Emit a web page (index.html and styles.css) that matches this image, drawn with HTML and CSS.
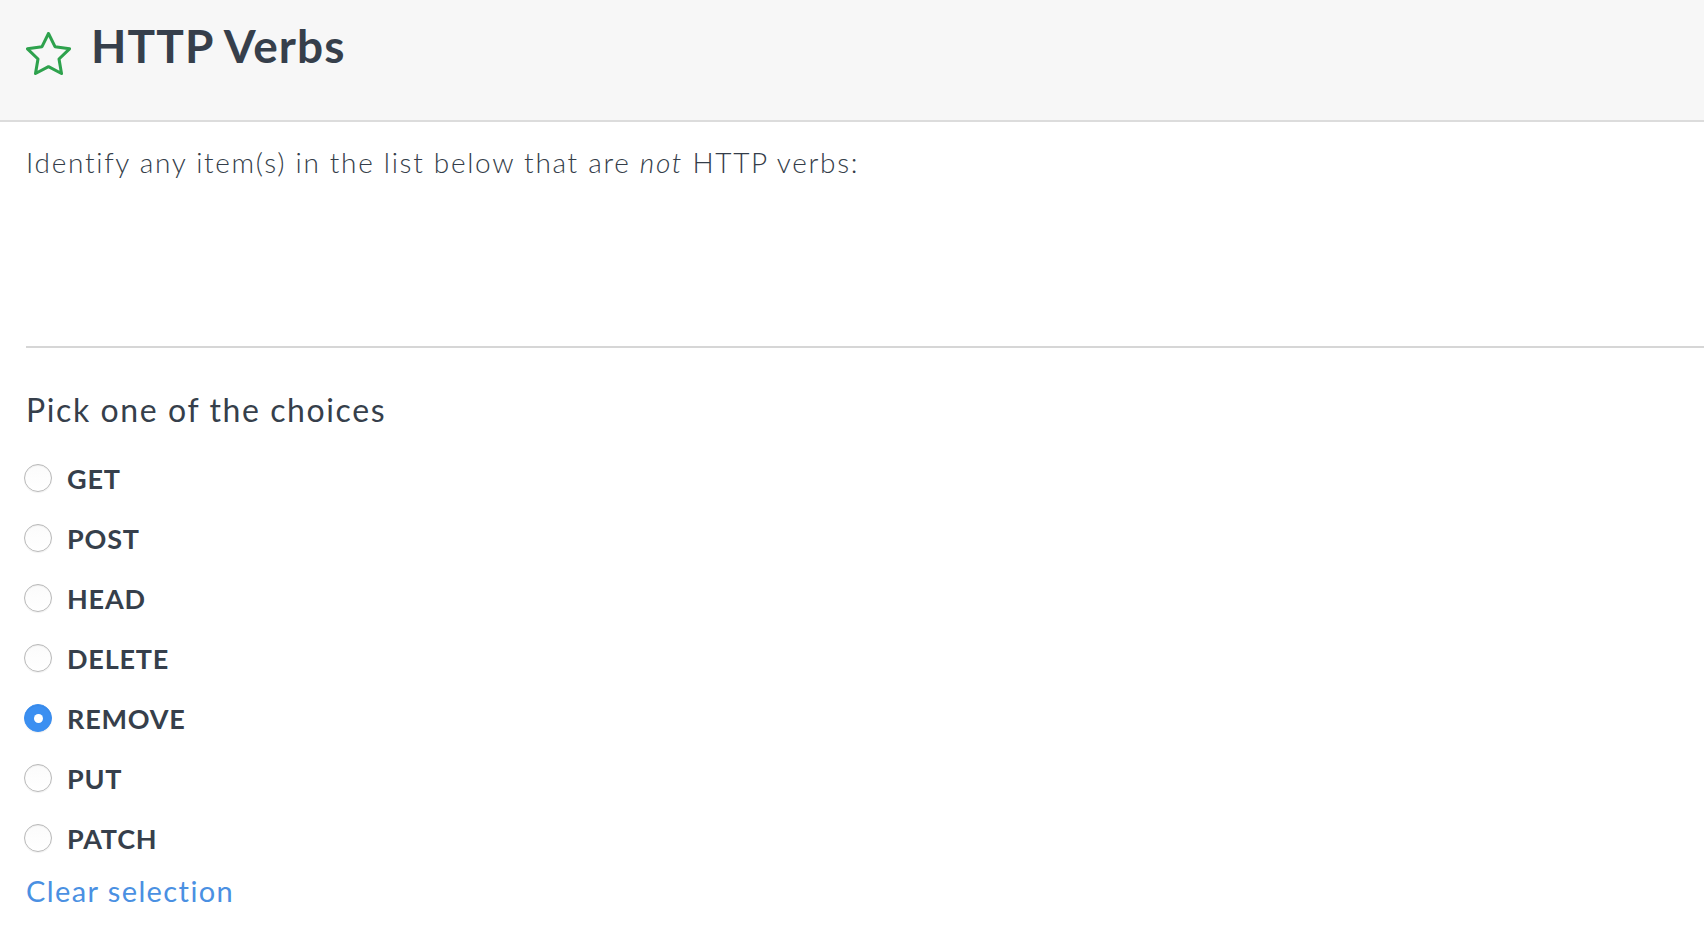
FILE: index.html
```html
<!DOCTYPE html>
<html>
<head>
<meta charset="utf-8">
<link rel="stylesheet" href="styles.css">
</head>
<body>
<header class="header">
  <svg class="star" width="45" height="43" viewBox="1.3 1.3 21.4 20.42" aria-hidden="true">
    <polygon points="12 2 15.09 8.26 22 9.27 17 14.14 18.18 21.02 12 17.77 5.82 21.02 7 14.14 2 9.27 8.91 8.26 12 2" fill="none" stroke="#2ea24d" stroke-width="1.45" stroke-linejoin="round"/>
  </svg>
  <h1 class="title">HTTP Verbs</h1>
</header>
<main class="main">
  <div class="question">
    <p class="prompt">Identify any item(s) in the list below that are <em>not</em> HTTP verbs:</p>
  </div>
  <div class="choices">
    <h2 class="choices-title">Pick one of the choices</h2>
    <ul class="options">
      <li class="option"><span class="radio"></span><span class="label">GET</span></li>
      <li class="option"><span class="radio"></span><span class="label">POST</span></li>
      <li class="option"><span class="radio"></span><span class="label">HEAD</span></li>
      <li class="option"><span class="radio"></span><span class="label">DELETE</span></li>
      <li class="option"><span class="radio checked"></span><span class="label">REMOVE</span></li>
      <li class="option"><span class="radio"></span><span class="label">PUT</span></li>
      <li class="option"><span class="radio"></span><span class="label">PATCH</span></li>
    </ul>
    <a class="clear" href="#">Clear selection</a>
  </div>
</main>
</body>
</html>
```
FILE: styles.css
```css
html, body {
  margin: 0;
  padding: 0;
  background: #ffffff;
  font-family: Lato, "Open Sans", sans-serif;
  color: #363f4b;
}

.header {
  box-sizing: border-box;
  height: 122px;
  background: #f7f7f7;
  border-bottom: 2px solid #dcdcdc;
  display: flex;
  align-items: flex-start;
  padding: 18px 0 0 26px;
}

.star {
  display: block;
  margin-top: 14px;
  flex: none;
}

.title {
  margin: 0 0 0 20px;
  font-size: 46px;
  line-height: 56px;
  font-weight: 700;
  letter-spacing: 1.1px;
  color: #363f4b;
}

.main {
  padding-left: 26px;
}

.question {
  box-sizing: border-box;
  height: 226px;
  padding-top: 22px;
  border-bottom: 2px solid #d6d6d6;
}

.prompt {
  margin: 0;
  font-size: 28px;
  line-height: 36px;
  font-weight: 300;
  letter-spacing: 1.7px;
  color: #343d49;
}

.prompt em {
  font-style: italic;
}

.choices {
  padding-top: 42px;
}

.choices-title {
  margin: 0 0 18px;
  font-size: 32px;
  line-height: 40px;
  font-weight: 400;
  letter-spacing: 1.6px;
  color: #363f4b;
}

.options {
  list-style: none;
  margin: 0;
  padding: 0;
}

.option {
  height: 60px;
  display: flex;
  align-items: center;
}

.radio {
  box-sizing: border-box;
  width: 28px;
  height: 28px;
  margin-left: -2px;
  border-radius: 50%;
  border: 1px solid #b9b9b9;
  background: linear-gradient(#fbfbfb, #ffffff);
  box-shadow: inset 0 1px 1px rgba(0, 0, 0, 0.06), 0 1px 1px rgba(0, 0, 0, 0.06);
  display: flex;
  align-items: center;
  justify-content: center;
  flex: none;
}

.radio.checked {
  border-color: #3a8ef0;
  background: #3b8ff1;
}

.radio.checked::after {
  content: "";
  width: 9px;
  height: 9px;
  border-radius: 50%;
  background: #ffffff;
}

.label {
  margin-left: 15px;
  font-size: 27px;
  line-height: 27px;
  font-weight: 700;
  letter-spacing: 0.8px;
  color: #363f4b;
}

.clear {
  display: inline-block;
  margin-top: 5px;
  font-size: 29px;
  line-height: 36px;
  font-weight: 400;
  letter-spacing: 1.4px;
  color: #4a90e2;
  text-decoration: none;
}
```
